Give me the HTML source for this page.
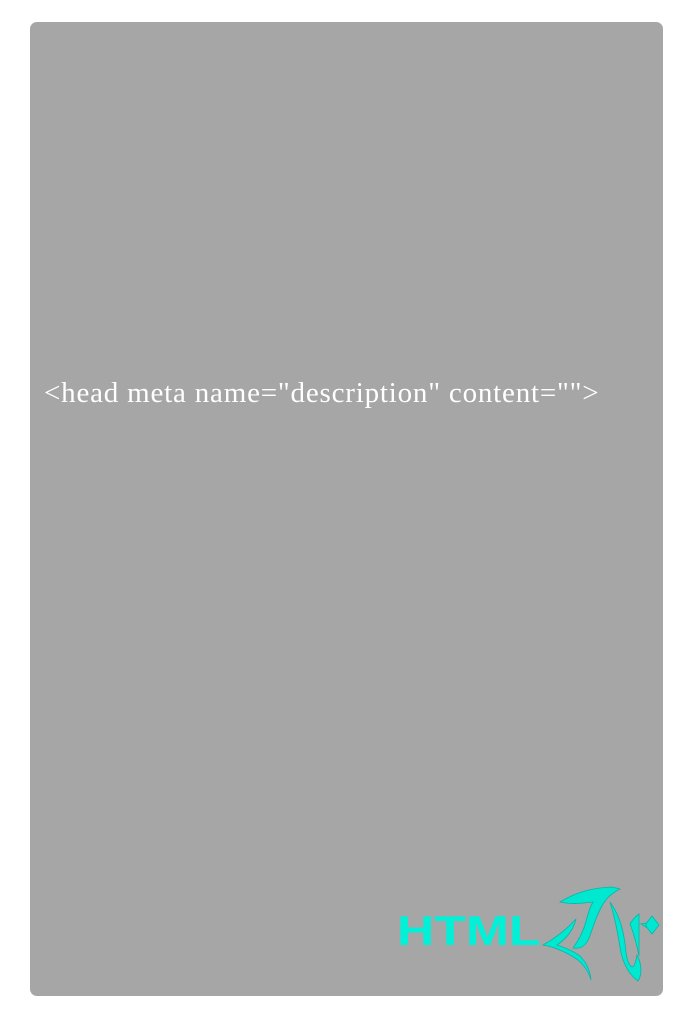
<!DOCTYPE html>
<html><head><meta charset="utf-8"><style>
html,body{margin:0;padding:0;background:#fff;width:700px;height:1024px;overflow:hidden}
.card{position:absolute;left:30px;top:22px;width:633px;height:974px;background:#a6a6a6;border-radius:7px}
.t{position:absolute;left:44px;top:377px;font-family:"Liberation Serif",serif;font-size:29px;color:#fff;white-space:nowrap;letter-spacing:0.8px}
.h{position:absolute;left:397px;top:907px;font-family:"Liberation Sans",sans-serif;font-weight:bold;font-size:42px;line-height:48px;color:#00f0d8;transform:scaleX(1.23);transform-origin:top left}
</style></head><body>
<div class="card"></div>
<div class="t">&lt;head meta name="description" content=""&gt;</div>
<div class="h">HTML</div>
<svg style="position:absolute;left:540px;top:884px" width="125" height="100" viewBox="0 0 125 100">
<g fill="#00e8d0" stroke="#00b8a8" stroke-width="0.8">
<path d="M20 18 C35 9 50 4 72 3 L80 5 C72 9 66 14 62 22 C56 32 53 44 49 54 C46 62 40 65 33 64 C39 56 44 46 47 34 C49 26 51 21 53 18 C43 19 33 21 20 18Z"/>
<path d="M36 35 C26 46 14 55 3 61 C15 63 28 69 38 76 C45 82 49 89 51 96 C50 86 46 78 40 72 C32 66 23 63 17 61 C26 55 33 47 36 35Z"/>
<path d="M70 18 C75 34 78 50 80 63 C82 77 88 90 98 97 C102 91 102 80 97 71 C96 78 94 83 92 83 C87 80 86 70 85 60 C83 44 78 29 70 18Z"/>
<path d="M90 40 C93 35 96 32 99 30 L99 72 C97 62 94 50 90 40Z"/>
<path d="M112 32 L119 41 L112 50 L105 41Z"/>
<path d="M101 40 L106 39 L106 43Z"/>
</g></svg>
</body></html>
